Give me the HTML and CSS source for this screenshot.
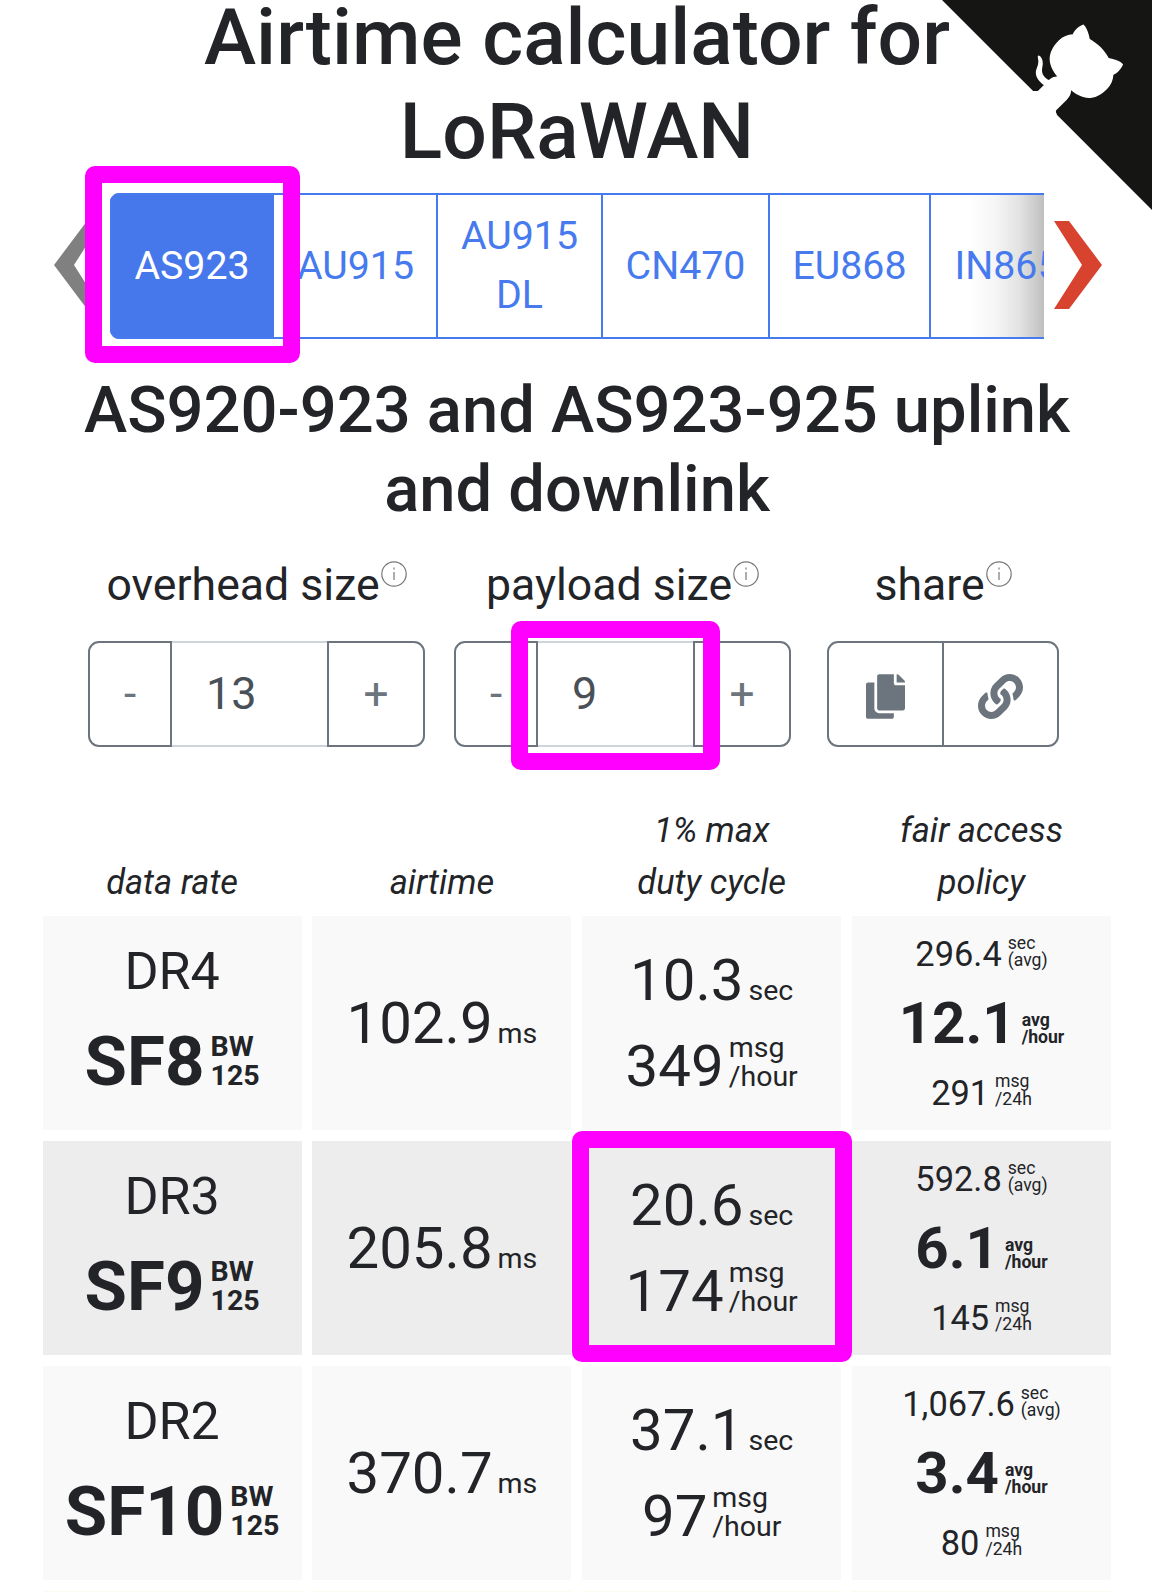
FILE: index.html
```html
<!DOCTYPE html>
<html lang="en">
<head>
<meta charset="utf-8">
<title>Airtime calculator for LoRaWAN</title>
<link rel="stylesheet" href="styles.css">
</head>
<body>
<main class="page">
  <svg class="corner" viewBox="0 0 250 250" aria-hidden="true">
    <path fill="#151513" d="M0,0 L115,115 L130,115 L142,142 L250,250 L250,0 Z"/>
    <path fill="#fff" d="M128.3,109.0 C113.8,99.7 119.0,89.6 119.0,89.6 C122.0,82.7 120.5,78.6 120.5,78.6 C119.2,72.0 123.4,76.3 123.4,76.3 C127.3,80.9 125.5,87.3 125.5,87.3 C122.9,97.6 130.6,101.9 134.4,103.2"/>
    <path fill="#fff" d="M115.0,115.0 C114.9,115.1 118.7,116.5 119.8,115.4 L133.7,101.6 C136.9,99.2 139.9,98.4 142.2,98.6 C133.8,88.0 127.5,74.4 143.8,58.0 C148.5,53.4 154.0,51.2 159.7,51.0 C160.3,49.4 163.2,43.6 171.4,40.1 C171.4,40.1 176.1,42.5 178.8,56.2 C183.1,58.6 187.2,61.8 190.9,65.4 C194.5,69.0 197.7,73.2 200.1,77.6 C213.8,80.2 216.3,84.9 216.3,84.9 C212.7,93.1 206.9,96.0 205.4,96.6 C205.1,102.4 203.0,107.8 198.3,112.5 C181.9,128.9 168.3,122.5 157.7,114.1 C157.9,116.9 156.7,120.9 152.7,124.9 L141.0,136.5 C139.8,137.7 141.6,141.9 141.8,141.8 Z"/>
  </svg>

  <h1 class="title">Airtime calculator for<br>LoRaWAN</h1>

  <nav class="regions">
    <svg class="arrow arrow-prev" viewBox="0 0 48 88"><path d="M0 44 33 0H48L20 44 48 88H33Z"/></svg>
    <div class="region-list">
      <a class="region active">AS923</a>
      <a class="region au">AU915</a>
      <a class="region audl">AU915<br>DL</a>
      <a class="region cn">CN470</a>
      <a class="region eu">EU868</a>
      <a class="region in">IN865</a>
    </div>
    <svg class="arrow arrow-next" viewBox="0 0 48 88"><path d="M48 44 15 0H0L28 44 0 88H15Z"/></svg>
  </nav>

  <h2 class="subtitle">AS920-923 and AS923-925 uplink<br>and downlink</h2>

  <section class="controls">
    <div class="control">
      <div class="label">overhead size<svg class="info" viewBox="0 0 26 26"><circle cx="13" cy="13" r="12.2"/><path d="M13 11v8M13 6.500v2"/></svg></div>
      <div class="group"><span class="btn minus">-</span><span class="value">13</span><span class="btn plus">+</span></div>
    </div>
    <div class="control payload">
      <div class="label">payload size<svg class="info" viewBox="0 0 26 26"><circle cx="13" cy="13" r="12.2"/><path d="M13 11v8M13 6.500v2"/></svg></div>
      <div class="group"><span class="btn minus">-</span><span class="value">9</span><span class="btn plus">+</span></div>
    </div>
    <div class="control share">
      <div class="label">share<svg class="info" viewBox="0 0 26 26"><circle cx="13" cy="13" r="12.2"/><path d="M13 11v8M13 6.500v2"/></svg></div>
      <div class="group">
        <span class="btn copy"><svg class="icon-copy" viewBox="0 0 448 512"><path d="M320 448v40c0 13.255-10.745 24-24 24H24c-13.255 0-24-10.745-24-24V120c0-13.255 10.745-24 24-24h72v296c0 30.879 25.121 56 56 56h168zm0-344V0H152c-13.255 0-24 10.745-24 24v368c0 13.255 10.745 24 24 24h272c13.255 0 24-10.745 24-24V128H344c-13.200 0-24-10.800-24-24zm120.971-31.029L375.029 7.029A24 24 0 0 0 358.059 0H352v96h96v-6.059a24 24 0 0 0-7.029-16.970z"/></svg></span>
        <span class="btn link"><svg class="icon-link" viewBox="0 0 512 512"><path d="M326.612 185.391c59.747 59.809 58.927 155.698.36 214.590-.11.120-.24.250-.36.370l-67.200 67.200c-59.270 59.270-155.699 59.262-214.960 0-59.270-59.260-59.270-155.700 0-214.960l37.106-37.106c9.840-9.840 26.786-3.300 27.294 10.606.648 17.722 3.826 35.527 9.690 52.721 1.986 5.822.567 12.262-3.783 16.612l-13.087 13.087c-28.026 28.026-28.905 73.660-1.155 101.960 28.024 28.579 74.086 28.749 102.325.510l67.200-67.190c28.191-28.191 28.073-73.757 0-101.830-3.701-3.694-7.429-6.564-10.341-8.569a16.037 16.037 0 0 1-6.947-12.606c-.396-10.567 3.348-21.456 11.698-29.806l21.054-21.055c5.521-5.521 14.182-6.199 20.584-1.731a152.482 152.482 0 0 1 20.522 17.197zM467.547 44.449c-59.261-59.262-155.690-59.270-214.960 0l-67.200 67.200c-.12.120-.25.250-.36.370-58.566 58.892-59.387 154.781.36 214.590a152.454 152.454 0 0 0 20.521 17.196c6.402 4.468 15.064 3.789 20.584-1.731l21.054-21.055c8.350-8.350 12.094-19.239 11.698-29.806a16.037 16.037 0 0 0-6.947-12.606c-2.912-2.005-6.640-4.875-10.341-8.569-28.073-28.073-28.191-73.639 0-101.830l67.200-67.190c28.239-28.239 74.300-28.069 102.325.510 27.750 28.300 26.872 73.934-1.155 101.960l-13.087 13.087c-4.350 4.350-5.769 10.790-3.783 16.612 5.864 17.194 9.042 34.999 9.690 52.721.509 13.906 17.454 20.446 27.294 10.606l37.106-37.106c59.271-59.259 59.271-155.699.001-214.959z"/></svg></span>
      </div>
    </div>
  </section>

  <section class="results">
    <div class="head">data rate</div>
    <div class="head">airtime</div>
    <div class="head">1% max<br>duty cycle</div>
    <div class="head">fair access<br>policy</div>

    <div class="cell rate"><div class="dr">DR4</div><div class="sf">SF8<span class="unit">BW<br>125</span></div></div>
    <div class="cell air"><div class="num">102.9<span class="unit">ms</span></div></div>
    <div class="cell duty"><div class="num">10.3<span class="unit">sec</span></div><div class="num">349<span class="unit">msg<br>/hour</span></div></div>
    <div class="cell fair"><div class="small">296.4<span class="unit">sec<br>(avg)</span></div><div class="bold">12.1<span class="unit">avg<br>/hour</span></div><div class="small day">291<span class="unit">msg<br>/24h</span></div></div>

    <div class="cell rate dark"><div class="dr">DR3</div><div class="sf">SF9<span class="unit">BW<br>125</span></div></div>
    <div class="cell air dark"><div class="num">205.8<span class="unit">ms</span></div></div>
    <div class="cell duty dark"><div class="num">20.6<span class="unit">sec</span></div><div class="num">174<span class="unit">msg<br>/hour</span></div></div>
    <div class="cell fair dark"><div class="small">592.8<span class="unit">sec<br>(avg)</span></div><div class="bold">6.1<span class="unit">avg<br>/hour</span></div><div class="small day">145<span class="unit">msg<br>/24h</span></div></div>

    <div class="cell rate"><div class="dr">DR2</div><div class="sf">SF10<span class="unit">BW<br>125</span></div></div>
    <div class="cell air"><div class="num">370.7<span class="unit">ms</span></div></div>
    <div class="cell duty"><div class="num">37.1<span class="unit">sec</span></div><div class="num">97<span class="unit">msg<br>/hour</span></div></div>
    <div class="cell fair"><div class="small">1,067.6<span class="unit">sec<br>(avg)</span></div><div class="bold">3.4<span class="unit">avg<br>/hour</span></div><div class="small day">80<span class="unit">msg<br>/24h</span></div></div>

    <div class="cell next"></div><div class="cell next"></div><div class="cell next"></div><div class="cell next"></div>
  </section>

  <div class="mark mark-region"></div>
  <div class="mark mark-payload"></div>
  <div class="mark mark-duty"></div>
</main>
</body>
</html>
```
FILE: styles.css
```css
* { box-sizing: border-box; }

body {
  margin: 0;
  background: #fff;
  color: #222428;
  font-family: Roboto, "Liberation Sans", sans-serif;
}

.page {
  position: relative;
  display: flow-root;
  width: 1152px;
  height: 1592px;
  overflow: hidden;
}

.corner {
  position: absolute;
  top: -11px;
  right: -1px;
  width: 222px;
  height: 222px;
}

.title {
  margin: -10.500px 0 0;
  padding-left: 2px;
  font-size: 78.600px;
  font-weight: 500;
  line-height: 94.2px;
  text-align: center;
}

.regions {
  display: flex;
  align-items: center;
  height: 146px;
  margin-top: 15.500px;
  padding-left: 54px;
}

.arrow { flex: none; width: 48px; height: 88px; margin-top: -2px; }
.arrow-prev { fill: #808080; }
.arrow-next { margin-left: 10px; fill: #d8432f; }

.region-list {
  display: flex;
  width: 934px;
  height: 146px;
  margin-left: 8px;
  overflow: hidden;
  border-radius: 9px 0 0 9px;
  background: linear-gradient(to right, rgba(0,0,0,0) 858px, rgba(0,0,0,.035) 884px, rgba(0,0,0,.11) 909px, rgba(0,0,0,.25) 934px);
}

.region {
  display: flex;
  flex: none;
  align-items: center;
  justify-content: center;
  border: solid #467aee;
  border-width: 2px 0 2px 2.500px;
  color: #467aee;
  font-size: 39.3px;
  line-height: 59px;
  text-align: center;
}

.region.active { width: 164px; padding-right: 2px; background: #4678ec; color: #fff; }
.region.au { width: 162px; padding-left: 1px; border-left: 0; }
.region.audl { width: 165px; }
.region.cn { width: 167px; }
.region.eu { width: 161px; }
.region.in { width: 154px; }

.subtitle {
  margin: 31.600px 0 0;
  padding-left: 2px;
  font-size: 65.100px;
  font-weight: 500;
  line-height: 79px;
  text-align: center;
}

.controls {
  display: flex;
  margin-top: 23px;
  padding-left: 88px;
}

.control { width: 337px; }
.control.payload { margin-left: 29px; }
.control.share { width: 232px; margin-left: 36px; }

.label {
  display: flex;
  justify-content: center;
  height: 66px;
  font-size: 44.600px;
  line-height: 66px;
  white-space: nowrap;
}

.info {
  width: 26px;
  height: 26px;
  margin: 8.500px 0 0 1px;
  fill: none;
  stroke: #777;
  stroke-width: 1.200px;
}

.group {
  display: flex;
  height: 106px;
  margin-top: 22.500px;
}

.btn {
  display: flex;
  align-items: center;
  justify-content: center;
  border: 2px solid #6c757d;
  color: #6c757d;
  font-size: 44.200px;
}

.btn:first-child { border-radius: 11px 0 0 11px; }
.btn:last-child { border-radius: 0 11px 11px 0; }
.minus { width: 84px; }
.plus { width: 98px; }
.copy { width: 116px; border-right-width: 1px; }
.link { width: 116px; border-left-width: 1px; }

.value {
  flex: 1;
  padding-left: 34px;
  border: solid #ced4da;
  border-width: 2px 0;
  color: #495057;
  font-size: 45px;
  line-height: 102px;
}

.icon-copy { width: 39px; height: 45px; margin-top: 6px; fill: #6c757d; }
.icon-link { width: 45px; height: 45px; margin-top: 6px; fill: #6c757d; }

.results {
  display: grid;
  grid-template-columns: repeat(4, 259px);
  grid-template-rows: 103px repeat(4, 214.500px);
  gap: 10.500px 10.800px;
  margin-top: 55.700px;
  padding-left: 42.600px;
}

.head {
  align-self: end;
  margin-bottom: -3px;
  font-size: 34.400px;
  font-style: italic;
  line-height: 51.500px;
  text-align: center;
}

.cell { background: #f9f9f9; text-align: center; white-space: nowrap; }
.cell.dark { background: #ededed; }
.cell.next { background: #fbfbee; }

.unit {
  display: inline-block;
  margin-left: 6px;
  font-size: 28.500px;
  line-height: 29px;
  text-align: left;
}

.rate { padding-top: 17px; }
.dr { height: 78px; font-size: 52px; line-height: 78px; }
.sf { height: 102px; font-size: 69px; font-weight: 700; line-height: 102px; }

.air { padding-top: 64.500px; }
.duty { padding-top: 21.300px; }
.num { height: 86.300px; font-size: 58.200px; line-height: 86.300px; }
.num .unit { margin-left: 5px; }

.fair { padding-top: 12.600px; }
.fair .unit { margin-left: 6px; font-size: 17.600px; line-height: 17.500px; }
.small { height: 52px; font-size: 34.400px; line-height: 52px; }
.bold { height: 87.400px; font-size: 58.200px; font-weight: 700; line-height: 87.400px; }
.day { height: 50px; line-height: 50px; }

/* highlight frames laid over the page */
.mark {
  position: absolute;
  border: 17px solid #f0f;
  border-radius: 10px;
}

.mark-region { left: 85px; top: 166px; width: 215px; height: 197px; }
.mark-payload { left: 511px; top: 621px; width: 209px; height: 149px; }
.mark-duty { left: 572px; top: 1131px; width: 280px; height: 231px; }
```
